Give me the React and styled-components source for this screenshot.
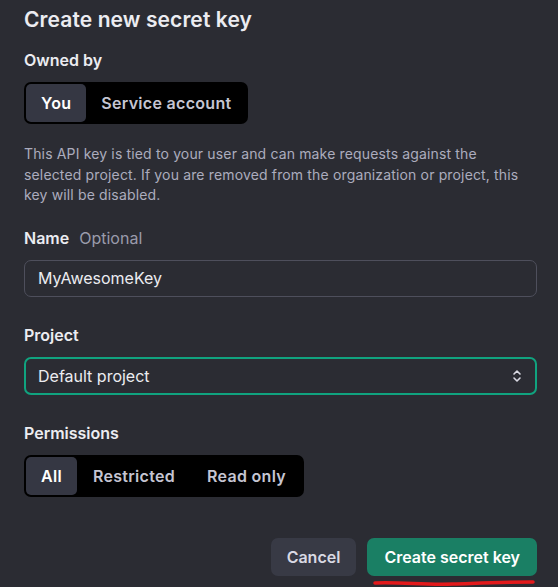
import React from 'react'
import styled, { createGlobalStyle } from 'styled-components'

const GlobalStyle = createGlobalStyle`
  html, body {
    margin: 0;
    padding: 0;
    background: #2b2c33;
  }
  body {
    font-family: Inter, 'Noto Sans', sans-serif;
    color: #ececf1;
  }
`

const Dialog = styled.div`
  width: 558px;
  height: 587px;
  box-sizing: border-box;
  padding: 6px 21px 0 24px;
  display: flex;
  flex-direction: column;
  overflow: hidden;
`

const Title = styled.h2`
  margin: 0;
  font-size: 21px;
  line-height: 28px;
  font-weight: 600;
  letter-spacing: 0.1px;
  color: #ececf1;
`

const Label = styled.div`
  margin-top: ${(p) => p.$top}px;
  font-size: 16px;
  line-height: 20px;
  font-weight: 600;
  color: #ececf1;
  display: flex;
  gap: 10px;
`

const Hint = styled.span`
  font-weight: 400;
  color: #9a9bab;
`

const Segment = styled.div`
  margin-top: 12px;
  align-self: flex-start;
  display: flex;
  padding: 2px;
  background: #000;
  border-radius: 7px;
`

const SegButton = styled.button`
  height: 38px;
  padding: 0 ${(p) => p.$pad || 15}px;
  border: none;
  border-radius: 5px;
  font-family: inherit;
  font-size: 16px;
  font-weight: 600;
  letter-spacing: 0.3px;
  background: ${(p) => (p.$active ? '#353743' : 'transparent')};
  color: ${(p) => (p.$active ? '#ffffff' : '#c5c5d2')};
`

const Description = styled.p`
  margin: 20px 0 0;
  font-size: 14px;
  letter-spacing: 0.15px;
  line-height: 20.5px;
  color: #acacbe;
  white-space: nowrap;
`

const Input = styled.div`
  margin-top: 12px;
  height: 37px;
  box-sizing: border-box;
  border: 1px solid #4e4f5c;
  border-radius: 7px;
  padding: 0 13px;
  display: flex;
  align-items: center;
  font-size: 16px;
  color: #ececf1;
`

const Select = styled(Input)`
  height: 38px;
  border: 2px solid #10a37f;
  padding: 0 12px 0 12px;
  justify-content: space-between;
`

const Footer = styled.div`
  margin-top: 41px;
  display: flex;
  justify-content: flex-end;
  gap: 11px;
`

const Button = styled.button`
  position: relative;
  height: 38px;
  padding: 0 ${(p) => p.$pad}px;
  border: none;
  border-radius: 7px;
  font-family: inherit;
  font-size: 16px;
  font-weight: 600;
  color: ${(p) => (p.$primary ? '#ffffff' : '#d9d9e3')};
  background: ${(p) => (p.$primary ? '#1a7f64' : '#383a45')};
`

const Scribble = styled.svg`
  position: absolute;
  left: 6px;
  top: 41px;
  overflow: visible;
`

const Chevrons = () => (
  <svg width="12" height="14" viewBox="0 0 12 14" fill="none" stroke="#d9d9e3" strokeWidth="1.6" strokeLinecap="round" strokeLinejoin="round">
    <path d="M3 5 L6 2 L9 5" />
    <path d="M3 9 L6 12 L9 9" />
  </svg>
)

export default function App() {
  return (
    <Dialog>
      <GlobalStyle />
      <Title>Create new secret key</Title>

      <Label $top={16}>Owned by</Label>
      <Segment>
        <SegButton $active>You</SegButton>
        <SegButton>Service account</SegButton>
      </Segment>

      <Description>
        This API key is tied to your user and can make requests against the
        <br />
        selected project. If you are removed from the organization or project, this
        <br />
        key will be disabled.
      </Description>

      <Label $top={22}>
        Name <Hint>Optional</Hint>
      </Label>
      <Input>MyAwesomeKey</Input>

      <Label $top={28}>Project</Label>
      <Select>
        <span>Default project</span>
        <Chevrons />
      </Select>

      <Label $top={28}>Permissions</Label>
      <Segment>
        <SegButton $active>All</SegButton>
        <SegButton $pad={16}>Restricted</SegButton>
        <SegButton $pad={16}>Read only</SegButton>
      </Segment>

      <Footer>
        <Button $pad={16}>Cancel</Button>
        <Button $primary $pad={17}>
          Create secret key
          <Scribble width="162" height="8" viewBox="0 0 162 8">
            <path
              d="M2 4 C30 3 50 6 80 5 C110 4 130 3 160 3"
              stroke="#e3191b"
              strokeWidth="3.5"
              fill="none"
              strokeLinecap="round"
            />
          </Scribble>
        </Button>
      </Footer>
    </Dialog>
  )
}
